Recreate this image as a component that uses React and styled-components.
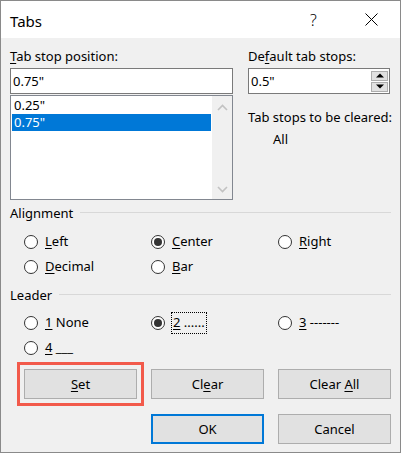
import React from "react";
import styled, { createGlobalStyle } from "styled-components";

const GlobalStyle = createGlobalStyle`
  html, body { margin: 0; padding: 0; background: #f0f0f0; }
  body {
    font-family: "Noto Sans", "Segoe UI", sans-serif;
    font-size: 13px;
    color: #000;
  }
  * { box-sizing: border-box; }
`;

const Window = styled.div`
  width: 401px;
  height: 453px;
  border: 1px solid #8a8a8a;
  background: #f0f0f0;
  display: flex;
  flex-direction: column;
`;

const TitleBar = styled.div`
  height: 37px;
  background: #fff;
  display: flex;
  align-items: center;
  padding-left: 9px;
`;

const Title = styled.div`
  font-size: 15px;
  line-height: 20px;
  margin-top: 2px;
`;

const TitleButtons = styled.div`
  margin-left: auto;
  display: flex;
  align-items: center;
`;

const HelpGlyph = styled.span`
  font-size: 16px;
  font-weight: 300;
  line-height: 20px;
  width: 10px;
  margin-right: 45px;
  margin-top: 1px;
`;

const CloseBox = styled.span`
  width: 13px;
  height: 13px;
  margin-right: 22px;
  display: flex;
`;

const Body = styled.div`
  padding: 0 9px;
  display: flex;
  flex-direction: column;
`;

const TopGrid = styled.div`
  display: grid;
  grid-template-columns: 223px 142px;
  column-gap: 15px;
  margin-top: 10px;
`;

const Column = styled.div`
  display: flex;
  flex-direction: column;
`;

const FieldLabel = styled.div`
  line-height: 16px;
  height: 16px;
  white-space: nowrap;
`;

const TextBox = styled.div`
  margin-top: 4px;
  height: 26px;
  border: 1px solid #7a7a7a;
  background: #fff;
  display: flex;
  align-items: center;
  padding-left: 2px;
  line-height: 16px;
`;

const SpinGroup = styled.div`
  margin-left: auto;
  margin-right: 1px;
  display: flex;
  flex-direction: column;
  gap: 1px;
`;

const SpinButton = styled.div`
  width: 17px;
  height: 10px;
  background: #e1e1e1;
  border: 1px solid #adadad;
  display: flex;
  align-items: center;
  justify-content: center;
`;

const ListBox = styled.div`
  margin-top: 1px;
  height: 105px;
  border: 1px solid #828790;
  background: #fff;
  display: flex;
`;

const ListItems = styled.div`
  flex: 1;
  padding: 1px;
  display: flex;
  flex-direction: column;
`;

const ListItem = styled.div`
  height: 17px;
  line-height: 17px;
  padding-left: 2px;
  background: ${(p) => (p.$selected ? "#0078d7" : "transparent")};
  color: ${(p) => (p.$selected ? "#fff" : "#000")};
`;

const ScrollTrack = styled.div`
  width: 20px;
  background: #f0f0f0;
  display: flex;
  flex-direction: column;
  justify-content: space-between;
  align-items: center;
  padding: 8px 0 6px;
`;

const ClearedLabel = styled.div`
  margin-top: 15px;
  line-height: 16px;
  white-space: nowrap;
`;

const ClearedValue = styled.div`
  margin-top: 6px;
  margin-left: 25px;
  line-height: 16px;
`;

const GroupHeader = styled.div`
  display: flex;
  align-items: center;
  gap: 7px;
  line-height: 16px;
  height: 16px;
  margin-top: ${(p) => p.$top}px;
`;

const GroupRule = styled.div`
  flex: 1;
  height: 1px;
  background: #d8d8d8;
  margin-top: -2px;
`;

const RadioGrid = styled.div`
  display: grid;
  grid-template-columns: repeat(3, 113px);
  grid-auto-rows: 25px;
  column-gap: 14px;
  padding-left: 14px;
  margin-top: ${(p) => p.$top}px;
`;

const RadioItem = styled.div`
  display: flex;
  align-items: center;
  gap: 7px;
  white-space: nowrap;
`;

const RadioCircle = styled.span`
  width: 14px;
  height: 14px;
  border-radius: 50%;
  border: 1px solid #333;
  background: #fff;
  display: flex;
  align-items: center;
  justify-content: center;
  flex: none;
  &::after {
    content: "";
    width: 8px;
    height: 8px;
    border-radius: 50%;
    background: #333;
    display: ${(p) => (p.$checked ? "block" : "none")};
  }
`;

const RadioText = styled.span`
  line-height: 17px;
  padding: ${(p) => (p.$focus ? "1px 1px 2px" : "0")};
  outline: ${(p) => (p.$focus ? "1px dotted #000" : "none")};
`;

const Key = styled.span`
  text-decoration: underline;
  text-underline-offset: 2px;
`;

const ButtonRow = styled.div`
  display: grid;
  grid-template-columns: repeat(3, 113px);
  column-gap: 14px;
  padding-left: 14px;
  margin-top: ${(p) => p.$top}px;
`;

const ButtonSlot = styled.div`
  position: relative;
  grid-column: ${(p) => p.$col || "auto"};
`;

const Button = styled.div`
  height: 30px;
  background: #e1e1e1;
  border: ${(p) => (p.$default ? "2px solid #0078d7" : "1px solid #adadad")};
  display: flex;
  align-items: center;
  justify-content: center;
  line-height: 16px;
`;

const Highlight = styled.div`
  position: absolute;
  top: -7px;
  left: -7px;
  right: -7px;
  bottom: -7px;
  border: 3px solid #f25a4b;
  pointer-events: none;
`;

const Chevron = ({ up }) => (
  <svg width="11" height="7" viewBox="0 0 11 7">
    <polyline
      points={up ? "1,6 5.5,1.5 10,6" : "1,1 5.5,5.5 10,1"}
      fill="none"
      stroke="#c2c2c2"
      strokeWidth="1.6"
    />
  </svg>
);

const Triangle = ({ up }) => (
  <svg width="8" height="5" viewBox="0 0 8 5">
    <polygon points={up ? "0,4.5 4,0.5 8,4.5" : "0,0.5 8,0.5 4,4.5"} fill="#000" />
  </svg>
);

const alignment = [
  { k: "L", rest: "eft" },
  { k: "C", rest: "enter", checked: true },
  { k: "R", rest: "ight" },
  { k: "D", rest: "ecimal" },
  { k: "B", rest: "ar" },
];

const leader = [
  { k: "1", rest: " None" },
  { k: "2", rest: " ......", checked: true, focus: true },
  { k: "3", rest: " -------" },
  { k: "4", rest: " ___" },
];

function RadioSet({ items, top }) {
  return (
    <RadioGrid $top={top}>
      {items.map((it) => (
        <RadioItem key={it.k}>
          <RadioCircle $checked={it.checked} />
          <RadioText $focus={it.focus}>
            <Key>{it.k}</Key>
            {it.rest}
          </RadioText>
        </RadioItem>
      ))}
    </RadioGrid>
  );
}

export default function App() {
  return (
    <>
      <GlobalStyle />
      <Window>
        <TitleBar>
          <Title>Tabs</Title>
          <TitleButtons>
            <HelpGlyph>?</HelpGlyph>
            <CloseBox>
              <svg width="13" height="13" viewBox="0 0 13 13">
                <path d="M0.5 0.5 L12.5 12.5 M12.5 0.5 L0.5 12.5" stroke="#000" strokeWidth="1" />
              </svg>
            </CloseBox>
          </TitleButtons>
        </TitleBar>
        <Body>
          <TopGrid>
            <Column>
              <FieldLabel>
                <Key>T</Key>ab stop position:
              </FieldLabel>
              <TextBox>0.75"</TextBox>
              <ListBox>
                <ListItems>
                  <ListItem>0.25"</ListItem>
                  <ListItem $selected>0.75"</ListItem>
                </ListItems>
                <ScrollTrack>
                  <Chevron up />
                  <Chevron />
                </ScrollTrack>
              </ListBox>
            </Column>
            <Column>
              <FieldLabel>
                De<Key>f</Key>ault tab stops:
              </FieldLabel>
              <TextBox>
                0.5"
                <SpinGroup>
                  <SpinButton>
                    <Triangle up />
                  </SpinButton>
                  <SpinButton>
                    <Triangle />
                  </SpinButton>
                </SpinGroup>
              </TextBox>
              <ClearedLabel>Tab stops to be cleared:</ClearedLabel>
              <ClearedValue>All</ClearedValue>
            </Column>
          </TopGrid>

          <GroupHeader $top={5}>
            Alignment
            <GroupRule />
          </GroupHeader>
          <RadioSet items={alignment} top={8} />

          <GroupHeader $top={8}>
            Leader
            <GroupRule />
          </GroupHeader>
          <RadioSet items={leader} top={7} />

          <ButtonRow $top={9}>
            <ButtonSlot>
              <Button>
                <span>
                  <Key>S</Key>et
                </span>
              </Button>
              <Highlight />
            </ButtonSlot>
            <ButtonSlot>
              <Button>
                <span>
                  Cl<Key>e</Key>ar
                </span>
              </Button>
            </ButtonSlot>
            <ButtonSlot>
              <Button>
                <span>
                  Clear <Key>A</Key>ll
                </span>
              </Button>
            </ButtonSlot>
          </ButtonRow>

          <ButtonRow $top={15}>
            <ButtonSlot $col="2">
              <Button $default>OK</Button>
            </ButtonSlot>
            <ButtonSlot>
              <Button>Cancel</Button>
            </ButtonSlot>
          </ButtonRow>
        </Body>
      </Window>
    </>
  );
}
